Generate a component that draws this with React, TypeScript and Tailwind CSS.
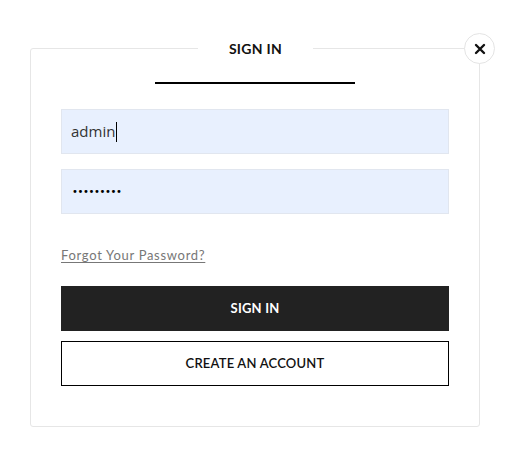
import React from 'react'

export default function App() {
  return (
    <div className="min-h-[459px] w-[510px] bg-white pl-[30px] pt-[48px]" style={{ fontFamily: 'Lato, "Noto Sans", sans-serif' }}>
      <div className="relative flex h-[379px] w-[450px] flex-col rounded-[3px] border border-[#e6e6e6] px-[30px] pt-[33px]">
        {/* Title sitting on the top border */}
        <div className="absolute left-[167px] top-[-10px] flex w-[115px] justify-center bg-white">
          <h2 className="text-[14px] font-bold leading-[20px] tracking-[0.3px] text-[#111]">SIGN IN</h2>
        </div>

        {/* Close */}
        <button
          type="button"
          className="absolute right-[-16px] top-[-16px] flex h-[31px] w-[31px] items-center justify-center rounded-full border border-[#e4e4e4] bg-white"
        >
          <svg width="12" height="12" viewBox="0 0 12 12">
            <path d="M2 2 L10 10 M10 2 L2 10" stroke="#111" strokeWidth="2.4" strokeLinecap="round" />
          </svg>
        </button>

        <div className="mx-auto h-[2px] w-[200px] bg-black" />

        <div className="mt-[25px] flex h-[45px] items-center border border-[#e1e6ef] bg-[#e8f0fe] px-[9px] text-[15px] text-[#333]" style={{ fontFamily: '"Open Sans", "Noto Sans", sans-serif' }}>
          admin<span className="ml-[1px] inline-block h-[20px] w-[1px] bg-black" />
        </div>

        <div className="mt-[15px] flex h-[45px] items-center border border-[#e1e6ef] bg-[#e8f0fe] px-[10px] text-[10px] tracking-[-0.4px] text-black" style={{ fontFamily: '"DejaVu Sans", sans-serif' }}>
          •••••••••
        </div>

        <a href="#" className="mt-[32px] self-start text-[13px] leading-[18px] tracking-[0.7px] text-[#777] underline underline-offset-2">
          Forgot Your Password?
        </a>

        <button type="button" className="mt-[22px] flex h-[45px] items-center justify-center bg-[#222] text-[13px] font-bold tracking-[0.2px] text-white">
          SIGN IN
        </button>

        <button type="button" className="mt-[10px] flex h-[45px] items-center justify-center border border-black bg-white text-[13px] font-semibold tracking-[0.2px] text-[#111]">
          CREATE AN ACCOUNT
        </button>
      </div>
    </div>
  )
}
